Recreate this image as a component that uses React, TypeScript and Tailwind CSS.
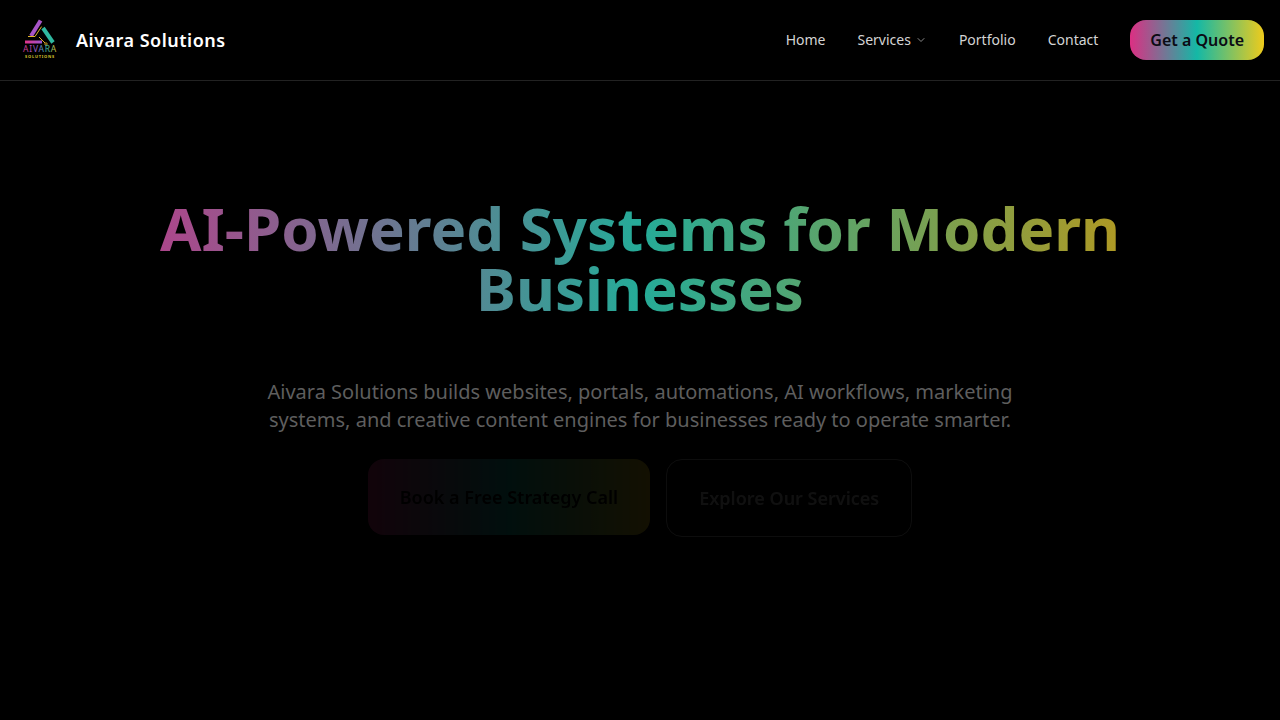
import { ChevronDown } from "lucide-react";

function Logo() {
  return (
    <svg width="40" height="44" viewBox="0 0 40 44" className="block">
      <defs>
        <linearGradient id="lg" x1="0" y1="0" x2="1" y2="0">
          <stop offset="0" stopColor="#e0338a" />
          <stop offset="0.4" stopColor="#8a5fd0" />
          <stop offset="0.7" stopColor="#2fb8a0" />
          <stop offset="1" stopColor="#e5c62a" />
        </linearGradient>
        <linearGradient id="base" x1="0" y1="0" x2="1" y2="0">
          <stop offset="0" stopColor="#e0338a" />
          <stop offset="1" stopColor="#9a55d0" />
        </linearGradient>
      </defs>
      <path d="M20.6 2.5 L11 18" stroke="#a855c7" strokeWidth="4" fill="none" />
      <rect x="5" y="22.5" width="17" height="3" fill="url(#base)" />
      <path d="M23 10 L33 24.5" stroke="#2fb8a0" strokeWidth="4" fill="none" />
      <path d="M8 18.5 H15 L21.6 8.6" stroke="#e5b62a" strokeWidth="1" fill="none" />
      <path d="M19 19 L25 25" stroke="#e5a82a" strokeWidth="1" fill="none" />
      <circle cx="26" cy="26" r="1.2" fill="none" stroke="#e5b62a" strokeWidth="0.8" />
      <text x="20" y="33.8" textAnchor="middle" fontSize="8.5" letterSpacing="0.8" fontFamily="'Noto Sans', sans-serif" fill="url(#lg)">AIVARA</text>
      <text x="20" y="40.3" textAnchor="middle" fontSize="4" fontWeight="700" letterSpacing="0.75" fontFamily="'Noto Sans', sans-serif" fill="#d8c22c">SOLUTIONS</text>
    </svg>
  );
}

export default function App() {
  return (
    <div className="min-h-[720px] bg-black font-['Noto_Sans',sans-serif] text-white">
      <header className="flex h-[81px] items-center justify-between border-b border-[#222222] px-4">
        <div className="flex items-center gap-3">
          <div className="flex h-12 w-12 items-center justify-center">
            <Logo />
          </div>
          <span className="text-lg font-semibold tracking-[0.0275em] text-white">Aivara Solutions</span>
        </div>
        <nav className="flex items-center gap-8 text-sm text-[#d4d4d4]">
          <a>Home</a>
          <a className="flex items-center gap-1">
            Services
            <ChevronDown className="h-3 w-3 text-[#8a8a8a]" />
          </a>
          <a>Portfolio</a>
          <a>Contact</a>
          <button className="h-10 rounded-2xl bg-[linear-gradient(to_right,#dc2f83,#14b8a6,#eecb1c)] px-5 text-base font-semibold text-[#0b0b14]">
            Get a Quote
          </button>
        </nav>
      </header>
      <main className="flex flex-col items-center pt-[117px] text-center">
        <h1 className="w-[1024px] bg-[linear-gradient(to_right,#b5408a,#25ab98,#b8981c)] bg-clip-text text-6xl leading-[60px] font-bold text-transparent">
          AI-Powered Systems for Modern Businesses
        </h1>
        <p className="mt-[60px] w-[768px] text-xl leading-7 text-[#5e5e5e]">
          Aivara Solutions builds websites, portals, automations, AI workflows, marketing systems, and creative content engines for businesses ready to operate smarter.
        </p>
        <div className="mt-[25px] flex items-start gap-4 opacity-[0.08]">
          <button className="rounded-2xl bg-[linear-gradient(to_right,#dc2f83,#14b8a6,#eecb1c)] px-8 py-6 text-lg leading-7 font-semibold text-black">
            Book a Free Strategy Call
          </button>
          <button className="rounded-2xl border border-[#aaaaaa] px-8 py-6 text-lg leading-7 font-semibold text-[#cccccc]">
            Explore Our Services
          </button>
        </div>
      </main>
    </div>
  );
}
